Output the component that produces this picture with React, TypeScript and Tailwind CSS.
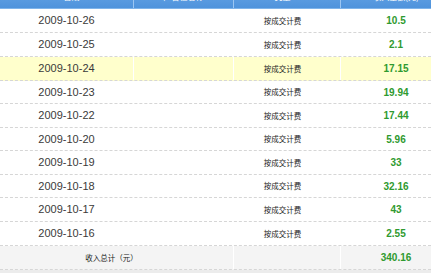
import React from "react";

const rows: { date: string; amount: string; h: string; hl?: boolean }[] = [
  { date: "2009-10-26", amount: "10.5", h: "h-[24px]" },
  { date: "2009-10-25", amount: "2.1", h: "h-[24px]" },
  { date: "2009-10-24", amount: "17.15", h: "h-[24px]", hl: true },
  { date: "2009-10-23", amount: "19.94", h: "h-[23px]" },
  { date: "2009-10-22", amount: "17.44", h: "h-[24px]" },
  { date: "2009-10-20", amount: "5.96", h: "h-[23px]" },
  { date: "2009-10-19", amount: "33", h: "h-[24px]" },
  { date: "2009-10-18", amount: "32.16", h: "h-[23px]" },
  { date: "2009-10-17", amount: "43", h: "h-[24px]" },
  { date: "2009-10-16", amount: "2.55", h: "h-[24px]" },
];

const cjk = { fontFamily: '"Noto Sans CJK SC", "Noto Sans", sans-serif' };

export default function App() {
  return (
    <div className="w-[431px] h-[273px] overflow-hidden bg-[#ececec]" style={{ fontFamily: '"Liberation Sans", Arial, sans-serif' }}>
      <div className="-mt-[15px] h-[24px] grid grid-cols-[134px_100px_107px_90px] bg-gradient-to-b from-[#6aa8e8] to-[#4f93dc] border-b border-[#7fb4ea] text-white text-[8px]" style={cjk}>
        <div className="flex items-center justify-center border-r border-[#9cc6f2] pl-[10px]">日期</div>
        <div className="flex items-center justify-center border-r border-[#9cc6f2]">广告位名称</div>
        <div className="flex items-center justify-center border-r border-[#9cc6f2] pr-[9px]">类型</div>
        <div className="flex items-center justify-center pl-[20px]">收入金额(元)</div>
      </div>
      {rows.map((r) => (
        <div
          key={r.date}
          className={`${r.h} grid grid-cols-[134px_100px_107px_90px] border-b border-dashed border-[#d6d6d6] ${r.hl ? "bg-[#ffffcc]" : "bg-white"}`}
        >
          <div className="flex items-center justify-center border-r border-white text-[11px] text-[#3a3a3a]">{r.date}</div>
          <div className="border-r border-white"></div>
          <div className="flex items-center justify-center border-r border-white pr-[9px] text-[7.5px] text-[#222]" style={cjk}>按成交计费</div>
          <div className="flex items-center justify-center pl-[20px] text-[10px] font-bold text-[#2f9a2f]">{r.amount}</div>
        </div>
      ))}
      <div className="h-[24px] grid grid-cols-[234px_107px_90px] border-b border-dashed border-[#d6d6d6] bg-[#f4f4f4]">
        <div className="flex items-center justify-center border-r border-white pr-[10px] text-[7.5px] text-[#222]" style={cjk}>收入总计（元）</div>
        <div className="border-r border-white"></div>
        <div className="flex items-center justify-center pl-[20px] text-[10px] font-bold text-[#2f9a2f]">340.16</div>
      </div>
    </div>
  );
}
